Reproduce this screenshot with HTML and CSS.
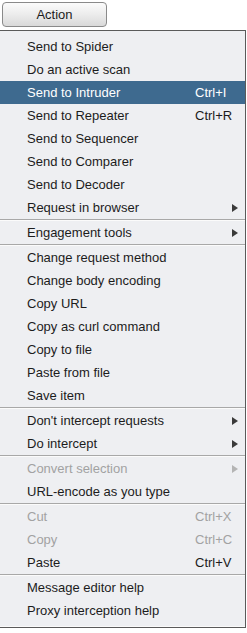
FILE: index.html
```html
<!DOCTYPE html>
<html lang="en">
<head>
  <meta charset="UTF-8">
  <meta name="viewport" content="width=device-width, initial-scale=1.0">
  <title>Action menu</title>
  <link rel="stylesheet" href="styles.css">
</head>
<body>
  <button class="action-btn">Action</button>

  <div class="menu">
    <div class="item"><span class="label">Send to Spider</span></div>
    <div class="item"><span class="label">Do an active scan</span></div>
    <div class="item active"><span class="label">Send to Intruder</span><span class="key">Ctrl+I</span></div>
    <div class="item"><span class="label">Send to Repeater</span><span class="key">Ctrl+R</span></div>
    <div class="item"><span class="label">Send to Sequencer</span></div>
    <div class="item"><span class="label">Send to Comparer</span></div>
    <div class="item"><span class="label">Send to Decoder</span></div>
    <div class="item"><span class="label">Request in browser</span><span class="arrow"></span></div>
    <div class="sep"></div>
    <div class="item"><span class="label">Engagement tools</span><span class="arrow"></span></div>
    <div class="sep"></div>
    <div class="item"><span class="label">Change request method</span></div>
    <div class="item"><span class="label">Change body encoding</span></div>
    <div class="item"><span class="label">Copy URL</span></div>
    <div class="item"><span class="label">Copy as curl command</span></div>
    <div class="item"><span class="label">Copy to file</span></div>
    <div class="item"><span class="label">Paste from file</span></div>
    <div class="item"><span class="label">Save item</span></div>
    <div class="sep"></div>
    <div class="item"><span class="label">Don't intercept requests</span><span class="arrow"></span></div>
    <div class="item"><span class="label">Do intercept</span><span class="arrow"></span></div>
    <div class="sep"></div>
    <div class="item disabled"><span class="label">Convert selection</span><span class="arrow"></span></div>
    <div class="item"><span class="label">URL-encode as you type</span></div>
    <div class="sep"></div>
    <div class="item disabled"><span class="label">Cut</span><span class="key">Ctrl+X</span></div>
    <div class="item disabled"><span class="label">Copy</span><span class="key">Ctrl+C</span></div>
    <div class="item"><span class="label">Paste</span><span class="key">Ctrl+V</span></div>
    <div class="sep"></div>
    <div class="item"><span class="label">Message editor help</span></div>
    <div class="item"><span class="label">Proxy interception help</span></div>
  </div>
</body>
</html>
```

FILE: styles.css
```css
body {
  margin: 0;
  background-color: #fff;
  font-family: 'Liberation Sans', Arial, sans-serif;
  font-size: 13px;
  color: #1c1c1c;
}

.action-btn {
  display: block;
  box-sizing: border-box;
  width: 105px;
  height: 25px;
  margin: 2px 0 3px 2px;
  padding: 0;
  border: 1px solid #8a8a8a;
  border-radius: 4px;
  background: linear-gradient(#fbfbfb, #ececec 50%, #d9d9d9);
  font-family: inherit;
  font-size: 13px;
  color: #1c1c1c;
}

.menu {
  box-sizing: border-box;
  width: 246px;
  padding: 4px 0 5px 0;
  border-top: 1px solid #5a5a5a;
  border-right: 1px solid #5a5a5a;
  border-bottom: 1px solid #5a5a5a;
  background-color: #eeeff2;
  box-shadow: inset 0 -1px 0 #fafafa;
}

.item {
  display: flex;
  align-items: center;
  height: 23px;
  padding-left: 27px;
}

.item .label {
  flex: 0 0 168px;
  white-space: nowrap;
}

.item .key {
  white-space: nowrap;
}

.item .arrow {
  width: 0;
  height: 0;
  margin-left: auto;
  margin-right: 7px;
  border-left: 6px solid #3a3a3a;
  border-top: 4px solid transparent;
  border-bottom: 4px solid transparent;
}

.item.active {
  background-color: #3e6a8f;
  color: #fff;
}

.item.disabled {
  color: #a2a2a2;
}

.item.disabled .arrow {
  border-left-color: #b4b4b4;
}

.sep {
  border-top: 1px solid #a8a8a8;
  border-bottom: 1px solid #fbfbfb;
}
```
